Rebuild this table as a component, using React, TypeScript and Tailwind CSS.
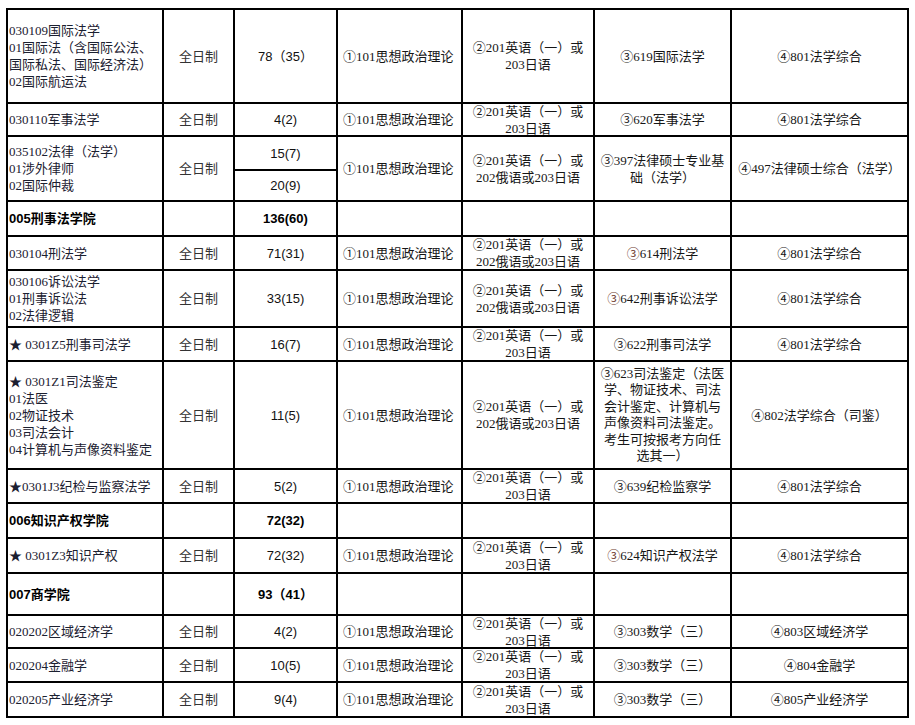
import React from 'react';
import clsx from 'clsx';

const SERIF = 'font-["Liberation_Serif","Noto_Sans_CJK_SC",serif]';
const SANS = 'font-["Liberation_Sans","Noto_Sans_CJK_SC",sans-serif]';

type CellProps = {
  h: string;
  left?: boolean;
  pad?: string;
  rowSpan?: number;
  className?: string;
  children?: React.ReactNode;
};

function C({ h, left, pad, rowSpan, className, children }: CellProps) {
  return (
    <td rowSpan={rowSpan} className="border-2 border-black p-0 align-middle">
      <div
        className={clsx(
          'flex flex-col justify-center overflow-visible whitespace-nowrap',
          h,
          left ? 'items-start text-left' : 'items-center text-center',
          left && (pad ?? 'pl-[1px]'),
          className,
        )}
      >
        {children}
      </div>
    </td>
  );
}

function Lines({ items }: { items: React.ReactNode[] }) {
  return (
    <>
      {items.map((t, i) => (
        <span key={i}>{t}</span>
      ))}
    </>
  );
}

const major = clsx(SERIF, 'text-[13px] leading-[17px] text-[#1b2030]');
const mode = clsx(SANS, 'text-[13px] leading-[17px] text-[#333]');
const num = clsx(SANS, 'text-[13px] leading-[17px] text-[#111]');
const subj = clsx(SERIF, 'text-[13px] leading-[17px] text-[#161616]');
const bold = clsx(SANS, 'text-[13px] leading-[17px] font-bold text-black');

const P1 = '①101思想政治理论';
const Red = ({ c }: { c: string }) => <span className="text-[#6e3a2e]">{c}</span>;

const EN2 = ['②201英语（一）或', '203日语'];
const EN3 = ['②201英语（一）或', '202俄语或203日语'];

type RowSpec = {
  h: string;
  major: React.ReactNode[];
  count: string;
  lang: string[];
  s3: React.ReactNode;
  s4: string;
};

function StdRow({ r }: { r: RowSpec }) {
  return (
    <tr>
      <C h={r.h} left className={major}>
        <Lines items={r.major} />
      </C>
      <C h={r.h} className={mode}>全日制</C>
      <C h={r.h} className={num}>{r.count}</C>
      <C h={r.h} left pad="pl-[5px]" className={subj}>{P1}</C>
      <C h={r.h} className={subj}>
        <Lines items={r.lang} />
      </C>
      <C h={r.h} className={subj}>{r.s3}</C>
      <C h={r.h} className={subj}>{r.s4}</C>
    </tr>
  );
}

function HeadRow({ h, name, count }: { h: string; name: string; count: string }) {
  return (
    <tr>
      <C h={h} left className={bold}>{name}</C>
      <C h={h} />
      <C h={h} className={bold}>{count}</C>
      <C h={h} />
      <C h={h} />
      <C h={h} />
      <C h={h} />
    </tr>
  );
}

export default function App() {
  return (
    <div className="bg-white w-[915px] h-[725px] pt-[8px] pl-[6px]">
      <table className="table-fixed border-collapse w-[903px]">
        <colgroup>
          <col className="w-[156px]" />
          <col className="w-[71px]" />
          <col className="w-[103px]" />
          <col className="w-[125px]" />
          <col className="w-[132px]" />
          <col className="w-[137px]" />
          <col className="w-[177px]" />
        </colgroup>
        <tbody>
          <StdRow
            r={{
              h: 'h-[92px]',
              major: ['030109国际法学', '01国际法（含国际公法、', '国际私法、国际经济法）', '02国际航运法'],
              count: '78（35）',
              lang: EN2,
              s3: '③619国际法学',
              s4: '④801法学综合',
            }}
          />
          <StdRow
            r={{
              h: 'h-[31px]',
              major: ['030110军事法学'],
              count: '4(2)',
              lang: EN2,
              s3: '③620军事法学',
              s4: '④801法学综合',
            }}
          />
          <tr>
            <C h="h-[63px]" rowSpan={2} left className={major}>
              <Lines items={['035102法律（法学）', '01涉外律师', '02国际仲裁']} />
            </C>
            <C h="h-[63px]" rowSpan={2} className={mode}>全日制</C>
            <C h="h-[32px]" className={num}>15(7)</C>
            <C h="h-[63px]" rowSpan={2} left pad="pl-[5px]" className={subj}>{P1}</C>
            <C h="h-[63px]" rowSpan={2} className={subj}>
              <Lines items={EN3} />
            </C>
            <C h="h-[63px]" rowSpan={2} className={subj}>
              <Lines items={['③397法律硕士专业基', '础（法学）']} />
            </C>
            <C h="h-[63px]" rowSpan={2} className={subj}>④497法律硕士综合（法学）</C>
          </tr>
          <tr>
            <C h="h-[29px]" className={num}>20(9)</C>
          </tr>
          <HeadRow h="h-[33px]" name="005刑事法学院" count="136(60)" />
          <StdRow
            r={{
              h: 'h-[32px]',
              major: ['030104刑法学'],
              count: '71(31)',
              lang: EN3,
              s3: (
                <span>
                  <Red c="③" />614刑法学
                </span>
              ),
              s4: '④801法学综合',
            }}
          />
          <StdRow
            r={{
              h: 'h-[55px]',
              major: ['030106诉讼法学', '01刑事诉讼法', '02法律逻辑'],
              count: '33(15)',
              lang: EN3,
              s3: (
                <span>
                  <Red c="③" />642刑事诉讼法学
                </span>
              ),
              s4: '④801法学综合',
            }}
          />
          <StdRow
            r={{
              h: 'h-[32px]',
              major: ['★ 0301Z5刑事司法学'],
              count: '16(7)',
              lang: EN2,
              s3: '③622刑事司法学',
              s4: '④801法学综合',
            }}
          />
          <StdRow
            r={{
              h: 'h-[106px]',
              major: ['★ 0301Z1司法鉴定', '01法医', '02物证技术', '03司法会计', '04计算机与声像资料鉴定'],
              count: '11(5)',
              lang: EN3,
              s3: (
                <span className="flex flex-col items-center leading-[16.5px]">
                  <span>③623司法鉴定（法医</span>
                  <span>学、物证技术、司法</span>
                  <span>会计鉴定、计算机与</span>
                  <span>声像资料司法鉴定。</span>
                  <span>考生可按报考方向任</span>
                  <span>选其一）</span>
                </span>
              ),
              s4: '④802法学综合（司鉴）',
            }}
          />
          <StdRow
            r={{
              h: 'h-[32px]',
              major: ['★0301J3纪检与监察法学'],
              count: '5(2)',
              lang: EN2,
              s3: '③639纪检监察学',
              s4: '④801法学综合',
            }}
          />
          <HeadRow h="h-[33px]" name="006知识产权学院" count="72(32)" />
          <StdRow
            r={{
              h: 'h-[33px]',
              major: ['★ 0301Z3知识产权'],
              count: '72(32)',
              lang: EN2,
              s3: (
                <span>
                  <Red c="③" />624知识产权法学
                </span>
              ),
              s4: '④801法学综合',
            }}
          />
          <HeadRow h="h-[40px]" name="007商学院" count="93（41）" />
          <StdRow
            r={{
              h: 'h-[31px]',
              major: ['020202区域经济学'],
              count: '4(2)',
              lang: EN2,
              s3: '③303数学（三）',
              s4: '④803区域经济学',
            }}
          />
          <StdRow
            r={{
              h: 'h-[32px]',
              major: ['020204金融学'],
              count: '10(5)',
              lang: EN2,
              s3: '③303数学（三）',
              s4: '④804金融学',
            }}
          />
          <StdRow
            r={{
              h: 'h-[33px]',
              major: ['020205产业经济学'],
              count: '9(4)',
              lang: EN2,
              s3: '③303数学（三）',
              s4: '④805产业经济学',
            }}
          />
        </tbody>
      </table>
    </div>
  );
}
